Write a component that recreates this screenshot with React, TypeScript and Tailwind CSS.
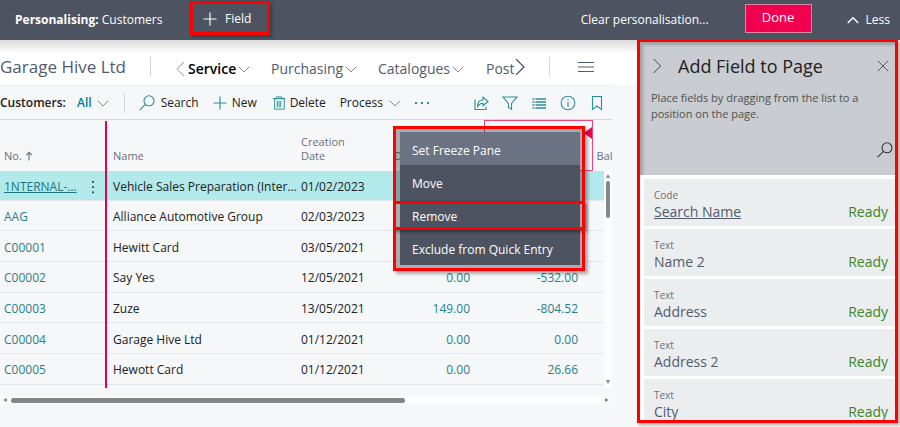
import { ReactNode } from "react";

type Row = { no: string; name: string; date: string; a: string; b: string };

const rows: Row[] = [
  { no: "1NTERNAL-…", name: "Vehicle Sales Preparation (Inter…", date: "01/02/2023", a: "", b: "" },
  { no: "AAG", name: "Alliance Automotive Group", date: "02/03/2023", a: "", b: "" },
  { no: "C00001", name: "Hewitt Card", date: "03/05/2021", a: "", b: "" },
  { no: "C00002", name: "Say Yes", date: "12/05/2021", a: "0.00", b: "-532.00" },
  { no: "C00003", name: "Zuze", date: "13/05/2021", a: "149.00", b: "-804.52" },
  { no: "C00004", name: "Garage Hive Ltd", date: "01/12/2021", a: "0.00", b: "0.00" },
  { no: "C00005", name: "Hewott Card", date: "01/12/2021", a: "0.00", b: "26.66" },
];

const fields = [
  { type: "Code", name: "Search Name" },
  { type: "Text", name: "Name 2" },
  { type: "Text", name: "Address" },
  { type: "Text", name: "Address 2" },
  { type: "Text", name: "City" },
];

function Icon({ children, size = 16, className = "" }: { children: ReactNode; size?: number; className?: string }) {
  return (
    <svg
      width={size}
      height={size}
      viewBox="0 0 16 16"
      fill="none"
      stroke="currentColor"
      strokeWidth="1.1"
      className={"shrink-0 " + className}
      aria-hidden="true"
    >
      {children}
    </svg>
  );
}

const Chevron = () => (
  <Icon size={12} className="text-[#6b7280]">
    <path d="M1 5l7 7 7-7" />
  </Icon>
);

const Search = ({ className = "" }: { className?: string }) => (
  <Icon className={className}>
    <circle cx="10" cy="5.8" r="5" />
    <path d="M6.4 9.4L.6 15.2" />
  </Icon>
);

const Plus = ({ className = "" }: { className?: string }) => (
  <Icon size={14} className={className}>
    <path d="M8 .5v15M.5 8h15" strokeWidth="1.3" />
  </Icon>
);

function TopBar() {
  return (
    <header className="relative z-10 flex h-10 items-center bg-[#4d5360] pb-1 text-xs text-white">
      <div className="w-[190px] shrink-0 pt-1 pl-[15px] whitespace-nowrap">
        <b className="font-bold">Personalising:</b> Customers
      </div>
      <button className="flex h-[34px] w-20 items-center gap-2 border-3 border-[#ff0000] pt-px pl-[10px] shadow-[2px_2px_3px_rgba(0,0,0,0.3)]">
        <Plus /> Field
      </button>
      <div className="flex-1" />
      <button className="pt-1">Clear personalisation...</button>
      <button className="ml-9 h-[29px] w-[67px] border border-[#d8889f] bg-[#f0004e] text-[13px]">Done</button>
      <button className="mr-[10px] ml-[35px] flex items-center gap-[7px] pt-1">
        <Icon size={12}>
          <path d="M1 12l7-7 7 7" strokeWidth="2" />
        </Icon>
        Less
      </button>
    </header>
  );
}

function RoleNav() {
  return (
    <div className="flex h-[45px] items-center bg-linear-to-b from-[#dcdcdc] via-white via-30% to-white pt-2 text-[#505c6d]">
      <h1 className="w-[150px] text-[17px] whitespace-nowrap">Garage Hive Ltd</h1>
      <div className="h-5 w-px bg-[#d2d5d9]" />
      <nav className="ml-6 flex items-center pt-1 text-sm whitespace-nowrap">
        <Icon size={16} className="-mr-[3px] text-[#b5bac1]">
          <path d="M9 1L2 8l7 7" />
        </Icon>
        <a href="#service" className="flex w-[83px] items-center gap-[2px] font-semibold text-black">
          Service <Chevron />
        </a>
        <a href="#purchasing" className="flex w-[107px] items-center gap-[2px]">
          Purchasing <Chevron />
        </a>
        <a href="#catalogues" className="flex w-[108px] items-center gap-[2px]">
          Catalogues <Chevron />
        </a>
        <a href="#posted">Post</a>
        <Icon size={16} className="-ml-1 mb-1 text-[#3f4856]">
          <path d="M5 0l8 8-8 8" />
        </Icon>
      </nav>
      <div className="flex-1" />
      <div className="h-5 w-px bg-[#d2d5d9]" />
      <button aria-label="Menu" className="mr-[43px] ml-7 text-[#505c6d]">
        <Icon>
          <path d="M0 3.500h16M0 8h16M0 12.500h16" />
        </Icon>
      </button>
    </div>
  );
}

function Toolbar() {
  return (
    <div className="mr-[25px] flex h-[35px] items-center border-t border-b border-t-[#eceef0] border-b-[#d5d8dc] text-xs whitespace-nowrap text-[#212121]">
      <b className="w-[77px] font-semibold">Customers:</b>
      <button className="flex items-center gap-[5px] font-semibold text-[#008089]">
        All <Chevron />
      </button>
      <div className="mr-[14px] ml-[15px] h-5 w-px bg-[#d2d5d9]" />
      <button className="flex w-[74px] items-center gap-[6px]">
        <Search className="text-[#2a8f95]" /> Search
      </button>
      <button className="flex w-[59px] items-center gap-[5px]">
        <Plus className="text-[#2a8f95]" /> New
      </button>
      <button className="flex w-[68px] items-center gap-1">
        <Icon size={14} className="text-[#2a8f95]">
          <path d="M2 3h12v12H3V3M1 3h14M5 3V1h6v2M6 5.500v7.500M8 5.500v7.500M10 5.500v7.500" />
        </Icon>
        Delete
      </button>
      <button className="flex w-[74px] items-center gap-[6px]">
        Process <Chevron />
      </button>
      <button aria-label="More options" className="text-[#2a8f95]">
        <Icon>
          <path d="M1 8h2M7 8h2M13 8h2" strokeWidth="1.800" />
        </Icon>
      </button>
      <div className="flex-1" />
      <div className="mr-[7px] flex gap-[13px] text-[#2a8f95]">
        <button aria-label="Share">
          <Icon>
            <path d="M2 4.500v10h11V11.500M4.500 11.500c0-4.500 2-6.500 5.500-6.500V2.200L15 6.500l-5 4.200V8.200C8 8.200 6 9 4.500 11.500z" />
          </Icon>
        </button>
        <button aria-label="Filter">
          <Icon>
            <path d="M1 2h14L9.500 8.500v5.800L6.500 12.500v-4z" />
          </Icon>
        </button>
        <button aria-label="List view">
          <Icon>
            <path d="M1.500 4h2M4.500 4h10.500M1.500 7h2M4.500 7h10.500M1.500 10h2M4.500 10h10.500M1.500 13h2M4.500 13h10.500" strokeWidth="1.300" />
          </Icon>
        </button>
        <button aria-label="Information">
          <Icon>
            <circle cx="8" cy="8" r="6.800" />
            <path d="M8 7v5M8 4v1.500" />
          </Icon>
        </button>
        <button aria-label="Bookmark">
          <Icon>
            <path d="M3.500 1.500h9v13L8 11l-4.500 3.500z" />
          </Icon>
        </button>
      </div>
    </div>
  );
}

function CustomerTable() {
  return (
    <table className="h-[268px] w-full table-fixed border-collapse text-xs whitespace-nowrap text-[#212121]">
      <colgroup>
        <col className="w-[106px]" />
        <col />
        <col className="w-[90px]" />
        <col className="w-[99px]" />
        <col className="w-[108px]" />
        <col className="w-[20px]" />
      </colgroup>
      <thead className="text-[11px] leading-[14px] text-[#6b6f76]">
        <tr className="h-[50px] text-left align-bottom">
          <th className="border-r-2 border-[#e60050] pb-2 pl-1 font-normal">
            <span className="flex items-center gap-[2px]">
              No.
              <Icon size={10}>
                <path d="M8 15V2M3.500 6.500L8 2l4.500 4.500" strokeWidth="1.800" />
              </Icon>
            </span>
          </th>
          <th className="pb-2 pl-[6px] font-normal">Name</th>
          <th className="pb-2 pl-[6px] font-normal">
            Creation
            <br />
            Date
          </th>
          <th className="pb-2 pl-[9px] font-normal">D</th>
          <th className="border border-[#f04580]" aria-label="Selected column">
            <div className="flex h-[43px] items-start justify-end">
              <div className="border-y-6 border-r-8 border-y-transparent border-r-[#f0004e]" />
            </div>
          </th>
          <th className="pb-2 pl-1 font-normal">Bal</th>
        </tr>
      </thead>
      <tbody>
        {rows.map((r, i) => (
          <tr key={r.no} className={i === 0 ? "border-b border-[#e4e6e9] bg-[#b2e9eb]" : "border-b border-[#e4e6e9]"}>
            <td className="border-r-2 border-r-[#e60050] pt-[3px] pl-1">
              <div className="flex items-center justify-between pr-[5px]">
                <a href={"#" + r.no} className={i === 0 ? "text-[#1c777c] underline" : "text-[#1f8287]"}>
                  {r.no}
                </a>
                {i === 0 && (
                  <button aria-label="Row options">
                    <Icon size={14}>
                      <path d="M8 1v2M8 7v2M8 13v2" strokeWidth="1.800" />
                    </Icon>
                  </button>
                )}
              </div>
            </td>
            <td className="pt-[3px] pl-[6px]">{r.name}</td>
            <td className="pt-[3px] pl-[6px]">{r.date}</td>
            <td className="pt-[3px] pr-[14px] text-right text-[#1f8287]">{r.a}</td>
            <td className="pt-[3px] pr-[14px] text-right text-[#1f8287]">{r.b}</td>
            <td />
          </tr>
        ))}
      </tbody>
      <tfoot>
        <tr className="h-1">
          <td className="border-r-2 border-r-[#e60050]" />
          <td colSpan={5} />
        </tr>
      </tfoot>
    </table>
  );
}

function ColumnMenu() {
  const item = "flex w-full items-center pt-1 pl-3 text-left";
  return (
    <div className="absolute top-[6px] right-[27px] h-[145px] w-48 text-xs text-white">
      <div className="h-full bg-black/30 py-[6px] pr-[5px] pl-[7px] shadow-[3px_3px_3px_rgba(0,0,0,0.3)]">
        <div role="menu" className="grid h-full grid-rows-4 bg-[#4d5360]">
          <button role="menuitem" className={item + " bg-[#6a7283]"}>Set Freeze Pane</button>
          <button role="menuitem" className={item}>Move</button>
          <button role="menuitem" className={item}>Remove</button>
          <button role="menuitem" className={item}>Exclude from Quick Entry</button>
        </div>
      </div>
      <div className="pointer-events-none absolute inset-0 flex flex-col" aria-hidden="true">
        <div className="h-[78px] border-3 border-[#ff0000]" />
        <div className="-mt-[3px] h-[29px] border-3 border-[#ff0000] shadow-[2px_2px_3px_rgba(0,0,0,0.4)]" />
        <div className="-mt-[3px] flex-1 border-3 border-[#ff0000]" />
      </div>
    </div>
  );
}

function FieldPanel() {
  return (
    <aside className="-mt-px mr-[2px] flex h-[384px] w-[261px] shrink-0 flex-col overflow-hidden border-3 border-[#ff0000] bg-white shadow-[2px_2px_3px_rgba(0,0,0,0.3)]">
      <div className="flex h-[133px] shrink-0 flex-col bg-[#c9ccd1] pt-3 pr-[6px] pl-[11px] shadow-[inset_3px_3px_3px_rgba(0,0,0,0.2)]">
        <div className="flex items-center">
          <button aria-label="Collapse" className="text-[#404040]">
            <Icon size={14}>
              <path d="M3 0l8 8-8 8" />
            </Icon>
          </button>
          <h2 className="ml-[13px] flex-1 text-[18px] leading-6 text-[#212121]">Add Field to Page</h2>
          <button aria-label="Close" className="text-[#404040]">
            <Icon size={12}>
              <path d="M1 1l14 14M15 1L1 15" />
            </Icon>
          </button>
        </div>
        <p className="mt-3 text-[11px] leading-4 text-[#505050]">
          Place fields by dragging from the list to a position on the page.
        </p>
        <button aria-label="Search fields" className="mt-5 -mr-1 self-end text-[#333]">
          <Search />
        </button>
      </div>
      <ul className="flex flex-col gap-[3px] pt-1 pl-1">
        {fields.map((f, i) => (
          <li key={f.name} className="flex h-[47px] shrink-0 items-end justify-between bg-[#ebedef] pr-[7px] pb-1 pl-[10px]">
            <div>
              <div className="text-[10px] leading-[14px] text-[#6b6f76]">{f.type}</div>
              <div className={i === 0 ? "text-sm leading-5 text-[#505c6d] underline" : "text-sm leading-5 text-[#505c6d]"}>
                {f.name}
              </div>
            </div>
            <span className="text-sm leading-5 text-[#3c8527]">Ready</span>
          </li>
        ))}
      </ul>
    </aside>
  );
}

export default function App() {
  return (
    <div className="min-h-screen overflow-hidden bg-[#f6f7f9] font-['Open_Sans','Noto_Sans',sans-serif]">
      <TopBar />
      <div className="flex">
        <main className="min-w-0 flex-1">
          <RoleNav />
          <Toolbar />
          <div className="relative mr-[25px] pb-1">
            <CustomerTable />
            <div className="absolute top-[50px] right-0 flex h-[218px] w-2 flex-col items-center bg-[#fcfcfc] py-1">
              <div className="border-x-2 border-b-4 border-x-transparent border-b-[#858585]" />
              <div className="mt-[3px] h-[37px] w-1 rounded-full bg-[#858585]" />
              <div className="flex-1" />
              <div className="border-x-2 border-t-4 border-x-transparent border-t-[#858585]" />
            </div>
            <ColumnMenu />
          </div>
          <div className="mt-1 mr-[25px] flex h-2 items-center bg-[#fcfcfc] px-[3px]">
            <div className="border-y-2 border-r-4 border-y-transparent border-r-[#858585]" />
            <div className="ml-1 h-[5px] w-[65%] rounded-full bg-[#858585]" />
            <div className="flex-1" />
            <div className="border-y-2 border-l-4 border-y-transparent border-l-[#858585]" />
          </div>
        </main>
        <FieldPanel />
      </div>
    </div>
  );
}
